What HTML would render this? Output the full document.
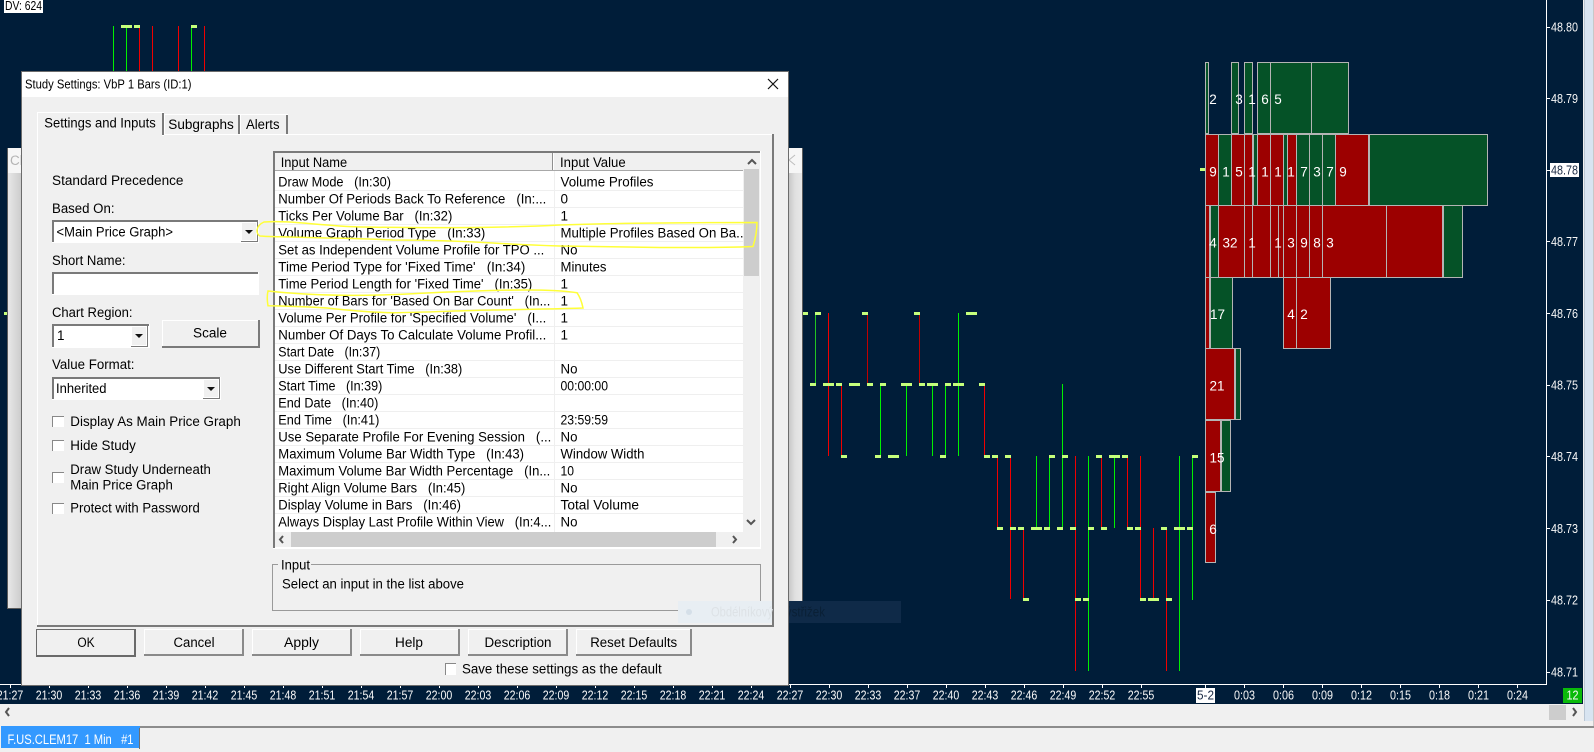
<!DOCTYPE html>
<html><head><meta charset="utf-8"><title>Study Settings</title>
<style>
html,body{margin:0;padding:0;background:#f0f0f0;width:1594px;height:752px;overflow:hidden}
svg{display:block;position:absolute;left:0;top:0}
text{font-family:"Liberation Sans",sans-serif;font-size:13.5px;fill:#000}
.ax text{font-size:12.5px;fill:#f8f8f8}
.pf text{font-size:13.5px;fill:#fff}
.r{fill:#9c0000}.g{fill:#055227}
.pf rect{stroke:#b4b4b4;stroke-width:1}
.d{fill:#c6ff7c}
</style></head><body>
<svg width="1594" height="752" viewBox="0 0 1594 752" xmlns="http://www.w3.org/2000/svg">
<defs>
<linearGradient id="sh" x1="0" x2="1" y1="0" y2="0"><stop offset="0" stop-color="#c4c4c4"/><stop offset=".5" stop-color="#e0e0e0"/><stop offset="1" stop-color="#e8e8e8"/></linearGradient>
<linearGradient id="sl" x1="0" x2="1" y1="0" y2="0"><stop offset="0" stop-color="#e8e8e8"/><stop offset="1" stop-color="#cacaca"/></linearGradient>
</defs>
<rect width="1594" height="752" fill="#f0f0f0"/>
<!-- chart -->
<rect x="0" y="0" width="1583" height="704" fill="#001d39"/>
<rect x="1584" y="0" width="9" height="721" fill="#d8e4f1"/>
<rect x="1584" y="0" width="1" height="721" fill="#b9c6d4"/>
<rect x="1593" y="0" width="1" height="726" fill="#c8c8c8"/>
<rect x="1546" y="0" width="1" height="685" fill="#fff"/>
<rect x="0" y="684" width="1547" height="1" fill="#fff"/>
<g shape-rendering="crispEdges" fill="#00f000">
<rect x="113" y="26" width="1" height="46"/><rect x="126" y="26" width="1" height="46"/><rect x="191" y="26" width="1" height="46"/>
<rect x="815" y="313" width="1" height="71" fill="#22c422"/>
<rect x="880" y="384" width="1" height="72"/><rect x="906" y="384" width="1" height="72"/><rect x="932" y="384" width="1" height="72"/><rect x="945" y="384" width="1" height="72"/>
<rect x="958" y="313" width="1" height="143"/><rect x="1036" y="456" width="1" height="72"/><rect x="1049" y="456" width="1" height="72"/>
<rect x="1062" y="384" width="1" height="144"/><rect x="1088" y="456" width="1" height="215"/><rect x="1114" y="456" width="1" height="72"/>
<rect x="1179" y="456" width="1" height="215"/><rect x="1192" y="456" width="1" height="144"/>
</g>
<g shape-rendering="crispEdges" fill="#f00000">
<rect x="139" y="26" width="1" height="46"/><rect x="152" y="26" width="1" height="46"/><rect x="178" y="26" width="1" height="46"/><rect x="204" y="26" width="1" height="46"/>
<rect x="828" y="313" width="1" height="143"/><rect x="841" y="384" width="1" height="72"/>
<rect x="867" y="313" width="1" height="71" fill="#c00000"/><rect x="919" y="313" width="1" height="71" fill="#c00000"/>
<rect x="984" y="384" width="1" height="72"/><rect x="997" y="456" width="1" height="72"/><rect x="1010" y="456" width="1" height="143"/>
<rect x="1023" y="528" width="1" height="71"/><rect x="1075" y="456" width="1" height="215"/><rect x="1101" y="456" width="1" height="72"/>
<rect x="1127" y="456" width="1" height="72"/><rect x="1140" y="456" width="1" height="143"/><rect x="1153" y="528" width="1" height="71"/>
<rect x="1166" y="528" width="1" height="143"/>
</g>
<g class="d" shape-rendering="crispEdges">
<rect x="121" y="25" width="11" height="3"/><rect x="134" y="25" width="6" height="3"/><rect x="191" y="25" width="6" height="3"/>
<rect x="4" y="312" width="3" height="3"/><rect x="1200" y="168" width="5" height="3"/>
<rect x="803" y="312" width="5" height="3"/><rect x="815" y="312" width="6" height="3"/><rect x="862" y="312" width="6" height="3"/><rect x="914" y="312" width="6" height="3"/><rect x="966" y="312" width="11" height="3"/>
<rect x="810" y="383" width="6" height="3"/><rect x="823" y="383" width="11" height="3"/><rect x="836" y="383" width="6" height="3"/><rect x="849" y="383" width="11" height="3"/><rect x="867" y="383" width="6" height="3"/><rect x="880" y="383" width="6" height="3"/><rect x="901" y="383" width="11" height="3"/><rect x="919" y="383" width="6" height="3"/><rect x="927" y="383" width="11" height="3"/><rect x="945" y="383" width="6" height="3"/><rect x="953" y="383" width="11" height="3"/><rect x="979" y="383" width="6" height="3"/>
<rect x="841" y="455" width="6" height="3"/><rect x="875" y="455" width="6" height="3"/><rect x="888" y="455" width="11" height="3"/><rect x="940" y="455" width="6" height="3"/><rect x="984" y="455" width="6" height="3"/><rect x="992" y="455" width="6" height="3"/><rect x="1005" y="455" width="6" height="3"/><rect x="1049" y="455" width="6" height="3"/><rect x="1062" y="455" width="6" height="3"/><rect x="1096" y="455" width="6" height="3"/><rect x="1109" y="455" width="11" height="3"/><rect x="1122" y="455" width="6" height="3"/><rect x="1192" y="455" width="6" height="3"/>
<rect x="997" y="527" width="6" height="3"/><rect x="1010" y="527" width="6" height="3"/><rect x="1018" y="527" width="6" height="3"/><rect x="1031" y="527" width="11" height="3"/><rect x="1044" y="527" width="6" height="3"/><rect x="1057" y="527" width="6" height="3"/><rect x="1070" y="527" width="6" height="3"/><rect x="1088" y="527" width="6" height="3"/><rect x="1101" y="527" width="6" height="3"/><rect x="1127" y="527" width="6" height="3"/><rect x="1135" y="527" width="6" height="3"/><rect x="1161" y="527" width="6" height="3"/><rect x="1174" y="527" width="11" height="3"/><rect x="1187" y="527" width="6" height="3"/>
<rect x="1023" y="598" width="6" height="3"/><rect x="1075" y="598" width="6" height="3"/><rect x="1083" y="598" width="6" height="3"/><rect x="1140" y="598" width="6" height="3"/><rect x="1148" y="598" width="11" height="3"/><rect x="1166" y="598" width="6" height="3"/>
</g>
<!-- profile -->
<g class="pf" shape-rendering="crispEdges">
<rect class="g" x="1205.5" y="62.5" width="3" height="71"/><rect class="g" x="1231.5" y="62.5" width="7" height="71"/><rect class="g" x="1244.5" y="62.5" width="8" height="71"/><rect class="g" x="1257.5" y="62.5" width="13" height="71"/><rect class="g" x="1270.5" y="62.5" width="41" height="71"/><rect class="g" x="1311.5" y="62.5" width="37" height="71"/>
<rect class="r" x="1205.5" y="134.5" width="13" height="71"/><rect class="g" x="1218.5" y="134.5" width="13" height="71"/><rect class="r" x="1231.5" y="134.5" width="13" height="71"/><rect class="r" x="1244.5" y="134.5" width="8" height="71"/><rect class="g" x="1253.5" y="134.5" width="4" height="71"/><rect class="r" x="1257.5" y="134.5" width="13" height="71"/><rect class="r" x="1270.5" y="134.5" width="13" height="71"/><rect class="g" x="1283.5" y="134.5" width="4" height="71"/><rect class="r" x="1287.5" y="134.5" width="9" height="71"/><rect class="g" x="1296.5" y="134.5" width="13" height="71"/><rect class="g" x="1309.5" y="134.5" width="13" height="71"/><rect class="g" x="1322.5" y="134.5" width="13" height="71"/><rect class="r" x="1335.5" y="134.5" width="33" height="71"/><rect class="g" x="1369.5" y="134.5" width="118" height="71"/>
<rect class="r" x="1205.5" y="205.5" width="4" height="72"/><rect class="g" x="1210.5" y="205.5" width="8" height="72"/><rect class="r" x="1218.5" y="205.5" width="26" height="72"/><rect class="r" x="1244.5" y="205.5" width="8" height="72"/><rect class="r" x="1252.5" y="205.5" width="18" height="72"/><rect class="r" x="1270.5" y="205.5" width="8" height="72"/><rect class="r" x="1278.5" y="205.5" width="5" height="72"/><rect class="r" x="1283.5" y="205.5" width="13" height="72"/><rect class="r" x="1296.5" y="205.5" width="13" height="72"/><rect class="r" x="1309.5" y="205.5" width="13" height="72"/><rect class="r" x="1322.5" y="205.5" width="64" height="72"/><rect class="r" x="1386.5" y="205.5" width="56" height="72"/><rect class="g" x="1443.5" y="205.5" width="19" height="72"/>
<rect class="r" x="1205.5" y="277.5" width="4" height="71"/><rect class="g" x="1210.5" y="277.5" width="22" height="71"/><rect class="r" x="1283.5" y="277.5" width="13" height="71"/><rect class="r" x="1296.5" y="277.5" width="34" height="71"/>
<rect class="r" x="1205.5" y="348.5" width="29" height="71"/><rect class="g" x="1235.5" y="348.5" width="5" height="71"/>
<rect class="r" x="1205.5" y="420.5" width="15" height="71"/><rect class="g" x="1221.5" y="420.5" width="9" height="71"/>
<rect class="r" x="1205.5" y="492.5" width="10" height="70"/>
</g>
<g class="pf" text-anchor="middle">
<text x="1213" y="104">2</text><text x="1239" y="104">3</text><text x="1252" y="104">1</text><text x="1265" y="104">6</text><text x="1278" y="104">5</text>
<text x="1213" y="176.5">9</text><text x="1226" y="176.5">1</text><text x="1239" y="176.5">5</text><text x="1252" y="176.5">1</text><text x="1265" y="176.5">1</text><text x="1278" y="176.5">1</text><text x="1291" y="176.5">1</text><text x="1304" y="176.5">7</text><text x="1317" y="176.5">3</text><text x="1330" y="176.5">7</text><text x="1343" y="176.5">9</text>
<text x="1213" y="247.5">4</text><text x="1230" y="247.5">32</text><text x="1252" y="247.5">1</text><text x="1278" y="247.5">1</text><text x="1291" y="247.5">3</text><text x="1304" y="247.5">9</text><text x="1317" y="247.5">8</text><text x="1330" y="247.5">3</text>
<text x="1217.5" y="319">17</text><text x="1291" y="319">4</text><text x="1304" y="319">2</text>
<text x="1217" y="390.5">21</text><text x="1217" y="462.5">15</text><text x="1213" y="534">6</text>
</g>
<!-- price axis -->
<g fill="#fff" shape-rendering="crispEdges">
<rect x="1547" y="27" width="3" height="1"/><rect x="1547" y="98" width="3" height="1"/><rect x="1547" y="170" width="3" height="1"/><rect x="1547" y="241" width="3" height="1"/><rect x="1547" y="313" width="3" height="1"/><rect x="1547" y="385" width="3" height="1"/><rect x="1547" y="456" width="3" height="1"/><rect x="1547" y="528" width="3" height="1"/><rect x="1547" y="600" width="3" height="1"/><rect x="1547" y="672" width="3" height="1"/>
</g>
<rect x="1550" y="163" width="29" height="14" fill="#fff"/>
<g class="ax">
<text x="1551" y="31.5" textLength="27" lengthAdjust="spacingAndGlyphs">48.80</text>
<text x="1551" y="103" textLength="27" lengthAdjust="spacingAndGlyphs">48.79</text>
<text x="1551" y="174.5" textLength="27" lengthAdjust="spacingAndGlyphs" style="fill:#1a2a44">48.78</text>
<text x="1551" y="246" textLength="27" lengthAdjust="spacingAndGlyphs">48.77</text>
<text x="1551" y="318" textLength="27" lengthAdjust="spacingAndGlyphs">48.76</text>
<text x="1551" y="389.5" textLength="27" lengthAdjust="spacingAndGlyphs">48.75</text>
<text x="1551" y="461" textLength="27" lengthAdjust="spacingAndGlyphs">48.74</text>
<text x="1551" y="533" textLength="27" lengthAdjust="spacingAndGlyphs">48.73</text>
<text x="1551" y="604.5" textLength="27" lengthAdjust="spacingAndGlyphs">48.72</text>
<text x="1551" y="676.5" textLength="27" lengthAdjust="spacingAndGlyphs">48.71</text>
</g>
<!-- time axis ticks -->
<path stroke="#fff" stroke-width="1" shape-rendering="crispEdges" d="M10.5 685v3M49.5 685v3M88.5 685v3M127.5 685v3M166.5 685v3M205.5 685v3M244.5 685v3M283.5 685v3M322.5 685v3M361.5 685v3M400.5 685v3M439.5 685v3M478.5 685v3M517.5 685v3M556.5 685v3M595.5 685v3M634.5 685v3M673.5 685v3M712.5 685v3M751.5 685v3M790.5 685v3M829.5 685v3M868.5 685v3M907.5 685v3M946.5 685v3M985.5 685v3M1024.5 685v3M1063.5 685v3M1102.5 685v3M1141.5 685v3M1205.5 685v3M1244.5 685v3M1283.5 685v3M1322.5 685v3M1361.5 685v3M1400.5 685v3M1439.5 685v3M1478.5 685v3M1517.5 685v3"/>
<rect x="1196" y="688" width="19" height="15" fill="#fff"/>
<rect x="1563" y="688" width="19" height="15" fill="#0aba0a"/>
<g class="ax" text-anchor="middle">
<text x="10" y="699.5" textLength="26.5" lengthAdjust="spacingAndGlyphs">21:27</text>
<text x="49" y="699.5" textLength="26.5" lengthAdjust="spacingAndGlyphs">21:30</text>
<text x="88" y="699.5" textLength="26.5" lengthAdjust="spacingAndGlyphs">21:33</text>
<text x="127" y="699.5" textLength="26.5" lengthAdjust="spacingAndGlyphs">21:36</text>
<text x="166" y="699.5" textLength="26.5" lengthAdjust="spacingAndGlyphs">21:39</text>
<text x="205" y="699.5" textLength="26.5" lengthAdjust="spacingAndGlyphs">21:42</text>
<text x="244" y="699.5" textLength="26.5" lengthAdjust="spacingAndGlyphs">21:45</text>
<text x="283" y="699.5" textLength="26.5" lengthAdjust="spacingAndGlyphs">21:48</text>
<text x="322" y="699.5" textLength="26.5" lengthAdjust="spacingAndGlyphs">21:51</text>
<text x="361" y="699.5" textLength="26.5" lengthAdjust="spacingAndGlyphs">21:54</text>
<text x="400" y="699.5" textLength="26.5" lengthAdjust="spacingAndGlyphs">21:57</text>
<text x="439" y="699.5" textLength="26.5" lengthAdjust="spacingAndGlyphs">22:00</text>
<text x="478" y="699.5" textLength="26.5" lengthAdjust="spacingAndGlyphs">22:03</text>
<text x="517" y="699.5" textLength="26.5" lengthAdjust="spacingAndGlyphs">22:06</text>
<text x="556" y="699.5" textLength="26.5" lengthAdjust="spacingAndGlyphs">22:09</text>
<text x="595" y="699.5" textLength="26.5" lengthAdjust="spacingAndGlyphs">22:12</text>
<text x="634" y="699.5" textLength="26.5" lengthAdjust="spacingAndGlyphs">22:15</text>
<text x="673" y="699.5" textLength="26.5" lengthAdjust="spacingAndGlyphs">22:18</text>
<text x="712" y="699.5" textLength="26.5" lengthAdjust="spacingAndGlyphs">22:21</text>
<text x="751" y="699.5" textLength="26.5" lengthAdjust="spacingAndGlyphs">22:24</text>
<text x="790" y="699.5" textLength="26.5" lengthAdjust="spacingAndGlyphs">22:27</text>
<text x="829" y="699.5" textLength="26.5" lengthAdjust="spacingAndGlyphs">22:30</text>
<text x="868" y="699.5" textLength="26.5" lengthAdjust="spacingAndGlyphs">22:33</text>
<text x="907" y="699.5" textLength="26.5" lengthAdjust="spacingAndGlyphs">22:37</text>
<text x="946" y="699.5" textLength="26.5" lengthAdjust="spacingAndGlyphs">22:40</text>
<text x="985" y="699.5" textLength="26.5" lengthAdjust="spacingAndGlyphs">22:43</text>
<text x="1024" y="699.5" textLength="26.5" lengthAdjust="spacingAndGlyphs">22:46</text>
<text x="1063" y="699.5" textLength="26.5" lengthAdjust="spacingAndGlyphs">22:49</text>
<text x="1102" y="699.5" textLength="26.5" lengthAdjust="spacingAndGlyphs">22:52</text>
<text x="1141" y="699.5" textLength="26.5" lengthAdjust="spacingAndGlyphs">22:55</text>
<text x="1205.5" y="699.5" textLength="17" lengthAdjust="spacingAndGlyphs" style="fill:#1a2a44">5-2</text>
<text x="1244.5" y="699.5" textLength="21" lengthAdjust="spacingAndGlyphs">0:03</text>
<text x="1283.5" y="699.5" textLength="21" lengthAdjust="spacingAndGlyphs">0:06</text>
<text x="1322.5" y="699.5" textLength="21" lengthAdjust="spacingAndGlyphs">0:09</text>
<text x="1361.5" y="699.5" textLength="21" lengthAdjust="spacingAndGlyphs">0:12</text>
<text x="1400.5" y="699.5" textLength="21" lengthAdjust="spacingAndGlyphs">0:15</text>
<text x="1439.5" y="699.5" textLength="21" lengthAdjust="spacingAndGlyphs">0:18</text>
<text x="1478.5" y="699.5" textLength="21" lengthAdjust="spacingAndGlyphs">0:21</text>
<text x="1517.5" y="699.5" textLength="21" lengthAdjust="spacingAndGlyphs">0:24</text>
<text x="1572.5" y="699.5" textLength="12" lengthAdjust="spacingAndGlyphs">12</text>
</g>
<!-- DV -->
<rect x="4" y="0" width="39" height="13" fill="#fff"/>
<text x="5" y="10" textLength="37" lengthAdjust="spacingAndGlyphs" style="font-size:12.5px">DV: 624</text>
<!-- bottom scrollbar -->
<rect x="1549" y="705" width="17" height="15" fill="#cdcdcd"/>
<path d="M9 708l-3 4 3 4" fill="none" stroke="#555" stroke-width="2"/>
<path d="M1573 708l3 4-3 4" fill="none" stroke="#555" stroke-width="2"/>
<!-- tab bar -->
<rect x="140" y="726" width="1454" height="2" fill="#8c8c8c"/>
<rect x="1" y="726" width="139" height="22" fill="#3399ff"/>
<rect x="139" y="728" width="1" height="21" fill="#707070"/>
<text x="7.5" y="744" textLength="126" lengthAdjust="spacingAndGlyphs" style="fill:#fff">F.US.CLEM17&#160;&#160;1 Min&#160;&#160;&#160;#1</text>
<!-- behind window -->
<rect x="7" y="148" width="796" height="461" fill="#5c5c5c"/>
<rect x="8" y="148" width="794" height="460" fill="#f6f6f6"/>
<rect x="8" y="173" width="14" height="435" fill="url(#sl)"/>
<rect x="788" y="173" width="14" height="435" fill="url(#sh)"/>
<text x="10" y="165" style="fill:#b4b4b4">Cl</text>
<path d="M795 155l-6 5 6 5" fill="none" stroke="#bdbdbd" stroke-width="1"/>
<!-- dialog -->
<rect x="21" y="71" width="768" height="615" fill="#6c6c6c"/>
<rect x="22" y="72" width="766" height="25" fill="#fff"/>
<rect x="22" y="97" width="766" height="588" fill="#f0f0f0"/>
<text x="25" y="88.5" textLength="166.5" lengthAdjust="spacingAndGlyphs" style="font-size:13px">Study Settings: VbP 1 Bars (ID:1)</text>
<path d="M768 79l10 10M778 79l-10 10" stroke="#111" stroke-width="1.2" fill="none"/>
<!-- tab panel -->
<g shape-rendering="crispEdges">
<rect x="37" y="134" width="737" height="493" fill="#7a7a7a"/>
<rect x="37" y="134" width="735" height="491" fill="#fff"/>
<rect x="38" y="135" width="734" height="490" fill="#f0f0f0"/>
<rect x="164" y="114" width="76" height="21" fill="#fff"/><rect x="165" y="115" width="73" height="19" fill="#f0f0f0"/><rect x="238" y="115" width="2" height="19" fill="#7a7a7a"/>
<rect x="240" y="114" width="48" height="21" fill="#fff"/><rect x="241" y="115" width="45" height="19" fill="#f0f0f0"/><rect x="286" y="115" width="2" height="19" fill="#7a7a7a"/>
<rect x="37" y="112" width="127" height="24" fill="#fff"/><rect x="38" y="113" width="124" height="23" fill="#f0f0f0"/><rect x="162" y="113" width="2" height="22" fill="#7a7a7a"/>
</g>
<text x="44.3" y="127.5" textLength="111.5" lengthAdjust="spacingAndGlyphs">Settings and Inputs</text>
<text x="168.3" y="129" textLength="65.5" lengthAdjust="spacingAndGlyphs">Subgraphs</text>
<text x="246" y="129" textLength="33.5" lengthAdjust="spacingAndGlyphs">Alerts</text>
<!-- left controls -->
<text x="52" y="185" textLength="131.5" lengthAdjust="spacingAndGlyphs">Standard Precedence</text>
<text x="52" y="213" textLength="62.5" lengthAdjust="spacingAndGlyphs">Based On:</text>
<g shape-rendering="crispEdges">
<rect x="52" y="220" width="207" height="23" fill="#fff"/><rect x="52" y="220" width="206" height="2" fill="#7a7a7a"/><rect x="52" y="220" width="2" height="22" fill="#7a7a7a"/>
<rect x="241" y="222" width="17" height="20" fill="#7a7a7a"/><rect x="241" y="222" width="16" height="19" fill="#fff"/><rect x="242" y="223" width="14" height="17" fill="#f0f0f0"/>
<rect x="52" y="272" width="207" height="23" fill="#fff"/><rect x="52" y="272" width="206" height="2" fill="#7a7a7a"/><rect x="52" y="272" width="2" height="22" fill="#7a7a7a"/>
<rect x="52" y="324" width="98" height="24" fill="#fff"/><rect x="52" y="324" width="97" height="2" fill="#7a7a7a"/><rect x="52" y="324" width="2" height="23" fill="#7a7a7a"/>
<rect x="131" y="326" width="17" height="21" fill="#7a7a7a"/><rect x="131" y="326" width="16" height="20" fill="#fff"/><rect x="132" y="327" width="14" height="18" fill="#f0f0f0"/>
<rect x="162" y="320" width="98" height="28" fill="#7a7a7a"/><rect x="162" y="320" width="96" height="26" fill="#fff"/><rect x="163" y="321" width="95" height="25" fill="#f0f0f0"/>
<rect x="52" y="377" width="169" height="23" fill="#fff"/><rect x="52" y="377" width="168" height="2" fill="#7a7a7a"/><rect x="52" y="377" width="2" height="22" fill="#7a7a7a"/>
<rect x="203" y="379" width="17" height="20" fill="#7a7a7a"/><rect x="203" y="379" width="16" height="19" fill="#fff"/><rect x="204" y="380" width="14" height="17" fill="#f0f0f0"/>
</g>
<path d="M245 230h8l-4 4zM135 334h8l-4 4zM207 387h8l-4 4z" fill="#111"/>
<text x="56.5" y="236.5" textLength="116.5" lengthAdjust="spacingAndGlyphs">&lt;Main Price Graph&gt;</text>
<text x="52" y="265" textLength="73.5" lengthAdjust="spacingAndGlyphs">Short Name:</text>
<text x="52" y="317" textLength="80.5" lengthAdjust="spacingAndGlyphs">Chart Region:</text>
<text x="57" y="340">1</text>
<text x="210" y="337.5" text-anchor="middle" textLength="34" lengthAdjust="spacingAndGlyphs">Scale</text>
<text x="52" y="369" textLength="82.5" lengthAdjust="spacingAndGlyphs">Value Format:</text>
<text x="56" y="393" textLength="50.5" lengthAdjust="spacingAndGlyphs">Inherited</text>
<g shape-rendering="crispEdges">
<rect x="52" y="416" width="12" height="11" fill="#fff"/><path d="M52.5 427V416.500H64" fill="none" stroke="#888"/>
<rect x="52" y="440" width="12" height="11" fill="#fff"/><path d="M52.5 451V440.500H64" fill="none" stroke="#888"/>
<rect x="52" y="472" width="12" height="11" fill="#fff"/><path d="M52.5 483V472.500H64" fill="none" stroke="#888"/>
<rect x="52" y="503" width="12" height="11" fill="#fff"/><path d="M52.5 514V503.500H64" fill="none" stroke="#888"/>
<rect x="445" y="663" width="11" height="12" fill="#fff"/><path d="M445.500 675V663.500H456" fill="none" stroke="#888"/>
</g>
<text x="70.3" y="426" textLength="170.5" lengthAdjust="spacingAndGlyphs">Display As Main Price Graph</text>
<text x="70.3" y="450" textLength="65.5" lengthAdjust="spacingAndGlyphs">Hide Study</text>
<text x="70.3" y="474" textLength="140.5" lengthAdjust="spacingAndGlyphs">Draw Study Underneath</text>
<text x="70.3" y="489.5" textLength="102.5" lengthAdjust="spacingAndGlyphs">Main Price Graph</text>
<text x="70.3" y="512.500" textLength="129.5" lengthAdjust="spacingAndGlyphs">Protect with Password</text>
<!-- list -->
<g shape-rendering="crispEdges">
<rect x="273" y="151" width="488" height="398" fill="#fff"/>
<rect x="273" y="151" width="487" height="2" fill="#7a7a7a"/><rect x="273" y="151" width="2" height="397" fill="#7a7a7a"/>
<rect x="275" y="153" width="468" height="18" fill="#f0f0f0"/><rect x="275" y="170" width="468" height="1" fill="#a8a8a8"/>
<rect x="552" y="153" width="1" height="17" fill="#909090"/><rect x="553" y="153" width="1" height="17" fill="#fff"/>
<path stroke="#efefef" d="M275 190.500H743M275 207.500H743M275 224.500H743M275 241.500H743M275 258.500H743M275 275.500H743M275 292.500H743M275 309.500H743M275 326.500H743M275 343.500H743M275 360.500H743M275 377.500H743M275 394.500H743M275 411.500H743M275 428.500H743M275 445.500H743M275 462.500H743M275 479.500H743M275 496.500H743M275 513.500H743M554.500 171V532"/>
<rect x="743" y="153" width="17" height="379" fill="#f0f0f0"/>
<rect x="744" y="169" width="15" height="107" fill="#cdcdcd"/>
<rect x="275" y="532" width="485" height="15" fill="#f0f0f0"/>
<rect x="291" y="532" width="425" height="15" fill="#cdcdcd"/>
</g>
<path d="M748 164l4-4 4 4M747 520l4 4 4-4M283 536l-3 3.500 3 3.500M733 536l3 3.500-3 3.500" fill="none" stroke="#555" stroke-width="2"/>
<text x="280.7" y="167" textLength="66.5" lengthAdjust="spacingAndGlyphs">Input Name</text>
<text x="560" y="167" textLength="65.7" lengthAdjust="spacingAndGlyphs">Input Value</text>
<g>
<text x="278.3" y="186.500" textLength="112.7" lengthAdjust="spacingAndGlyphs">Draw Mode&#160;&#160;&#160;(In:30)</text>
<text x="278.3" y="203.500" textLength="268" lengthAdjust="spacingAndGlyphs">Number Of Periods Back To Reference&#160;&#160;&#160;(In:...</text>
<text x="278.3" y="220.500" textLength="174" lengthAdjust="spacingAndGlyphs">Ticks Per Volume Bar&#160;&#160;&#160;(In:32)</text>
<text x="278.3" y="237.500" textLength="207" lengthAdjust="spacingAndGlyphs">Volume Graph Period Type&#160;&#160;&#160;(In:33)</text>
<text x="278.3" y="254.500" textLength="266" lengthAdjust="spacingAndGlyphs">Set as Independent Volume Profile for TPO ...</text>
<text x="278.3" y="271.500" textLength="247" lengthAdjust="spacingAndGlyphs">Time Period Type for 'Fixed Time'&#160;&#160;&#160;(In:34)</text>
<text x="278.3" y="288.500" textLength="254" lengthAdjust="spacingAndGlyphs">Time Period Length for 'Fixed Time'&#160;&#160;&#160;(In:35)</text>
<text x="278.3" y="305.500" textLength="272" lengthAdjust="spacingAndGlyphs">Number of Bars for 'Based On Bar Count'&#160;&#160;&#160;(In...</text>
<text x="278.3" y="322.500" textLength="268" lengthAdjust="spacingAndGlyphs">Volume Per Profile for 'Specified Volume'&#160;&#160;&#160;(I...</text>
<text x="278.3" y="339.500" textLength="268" lengthAdjust="spacingAndGlyphs">Number Of Days To Calculate Volume Profil...</text>
<text x="278.3" y="356.500" textLength="102" lengthAdjust="spacingAndGlyphs">Start Date&#160;&#160;&#160;(In:37)</text>
<text x="278.3" y="373.500" textLength="184" lengthAdjust="spacingAndGlyphs">Use Different Start Time&#160;&#160;&#160;(In:38)</text>
<text x="278.3" y="390.500" textLength="104" lengthAdjust="spacingAndGlyphs">Start Time&#160;&#160;&#160;(In:39)</text>
<text x="278.3" y="407.500" textLength="100" lengthAdjust="spacingAndGlyphs">End Date&#160;&#160;&#160;(In:40)</text>
<text x="278.3" y="424.500" textLength="101" lengthAdjust="spacingAndGlyphs">End Time&#160;&#160;&#160;(In:41)</text>
<text x="278.3" y="441.500" textLength="273" lengthAdjust="spacingAndGlyphs">Use Separate Profile For Evening Session&#160;&#160;&#160;(...</text>
<text x="278.3" y="458.500" textLength="245.700" lengthAdjust="spacingAndGlyphs">Maximum Volume Bar Width Type&#160;&#160;&#160;(In:43)</text>
<text x="278.3" y="475.500" textLength="272" lengthAdjust="spacingAndGlyphs">Maximum Volume Bar Width Percentage&#160;&#160;&#160;(In...</text>
<text x="278.3" y="492.500" textLength="187" lengthAdjust="spacingAndGlyphs">Right Align Volume Bars&#160;&#160;&#160;(In:45)</text>
<text x="278.3" y="509.500" textLength="182.700" lengthAdjust="spacingAndGlyphs">Display Volume in Bars&#160;&#160;&#160;(In:46)</text>
<text x="278.3" y="526.500" textLength="273" lengthAdjust="spacingAndGlyphs">Always Display Last Profile Within View&#160;&#160;&#160;(In:4...</text>
<text x="560.5" y="186.500" textLength="93" lengthAdjust="spacingAndGlyphs">Volume Profiles</text>
<text x="560.5" y="203.500">0</text><text x="560.5" y="220.500">1</text>
<text x="560.5" y="237.500" textLength="183" lengthAdjust="spacingAndGlyphs">Multiple Profiles Based On Ba..</text>
<text x="560.5" y="254.500" textLength="17" lengthAdjust="spacingAndGlyphs">No</text>
<text x="560.5" y="271.500" textLength="46" lengthAdjust="spacingAndGlyphs">Minutes</text>
<text x="560.5" y="288.500">1</text><text x="560.5" y="305.500">1</text><text x="560.5" y="322.500">1</text><text x="560.5" y="339.500">1</text>
<text x="560.5" y="373.500" textLength="17" lengthAdjust="spacingAndGlyphs">No</text>
<text x="560.5" y="390.500" textLength="47.500" lengthAdjust="spacingAndGlyphs">00:00:00</text>
<text x="560.5" y="424.500" textLength="47.500" lengthAdjust="spacingAndGlyphs">23:59:59</text>
<text x="560.5" y="441.500" textLength="17" lengthAdjust="spacingAndGlyphs">No</text>
<text x="560.5" y="458.500" textLength="84" lengthAdjust="spacingAndGlyphs">Window Width</text>
<text x="560.5" y="475.500" textLength="13.500" lengthAdjust="spacingAndGlyphs">10</text>
<text x="560.5" y="492.500" textLength="17" lengthAdjust="spacingAndGlyphs">No</text>
<text x="560.5" y="509.500" textLength="78.500" lengthAdjust="spacingAndGlyphs">Total Volume</text>
<text x="560.5" y="526.500" textLength="17" lengthAdjust="spacingAndGlyphs">No</text>
</g>
<!-- input group -->
<path d="M278 564.500H272.500V610.500H760.500V564.500H311" fill="none" stroke="#9a9a9a" shape-rendering="crispEdges"/>
<text x="281" y="569.500" textLength="29" lengthAdjust="spacingAndGlyphs">Input</text>
<text x="282" y="588.500" textLength="182" lengthAdjust="spacingAndGlyphs">Select an input in the list above</text>
<!-- buttons -->
<g shape-rendering="crispEdges">
<rect x="36" y="629" width="100" height="28" fill="#6a6a6a"/><rect x="37" y="630" width="97" height="25" fill="#f0f0f0"/>
<rect x="144" y="629" width="100" height="27" fill="#8a8a8a"/><rect x="144" y="629" width="98" height="25" fill="#fff"/><rect x="145" y="630" width="97" height="24" fill="#f0f0f0"/>
<rect x="252" y="629" width="100" height="27" fill="#8a8a8a"/><rect x="252" y="629" width="98" height="25" fill="#fff"/><rect x="253" y="630" width="97" height="24" fill="#f0f0f0"/>
<rect x="360" y="629" width="100" height="27" fill="#8a8a8a"/><rect x="360" y="629" width="98" height="25" fill="#fff"/><rect x="361" y="630" width="97" height="24" fill="#f0f0f0"/>
<rect x="468" y="629" width="100" height="27" fill="#8a8a8a"/><rect x="468" y="629" width="98" height="25" fill="#fff"/><rect x="469" y="630" width="97" height="24" fill="#f0f0f0"/>
<rect x="576" y="629" width="116" height="27" fill="#8a8a8a"/><rect x="576" y="629" width="114" height="25" fill="#fff"/><rect x="577" y="630" width="113" height="24" fill="#f0f0f0"/>
</g>
<g text-anchor="middle">
<text x="86" y="647" textLength="17.300" lengthAdjust="spacingAndGlyphs">OK</text>
<text x="194" y="647" textLength="41" lengthAdjust="spacingAndGlyphs">Cancel</text>
<text x="301.500" y="647" textLength="35" lengthAdjust="spacingAndGlyphs">Apply</text>
<text x="409" y="647" textLength="28" lengthAdjust="spacingAndGlyphs">Help</text>
<text x="518" y="647" textLength="67" lengthAdjust="spacingAndGlyphs">Description</text>
<text x="633.700" y="647" textLength="87" lengthAdjust="spacingAndGlyphs">Reset Defaults</text>
</g>
<text x="462" y="673.500" textLength="199.700" lengthAdjust="spacingAndGlyphs">Save these settings as the default</text>
<!-- faint overlay -->
<rect x="678" y="601" width="94" height="22" fill="#e8eef3"/>
<rect x="789" y="601" width="112" height="22" fill="#0f2a48"/>
<circle cx="689" cy="612" r="3" fill="#d5dfe8"/>
<text x="711" y="616.500" style="fill:#dde2e6" textLength="62" lengthAdjust="spacingAndGlyphs">Obdélníkový</text>
<text x="780" y="616.500" style="fill:#0a2036" textLength="45" lengthAdjust="spacingAndGlyphs">výstřižek</text>
<rect x="774" y="601" width="14" height="22" fill="#f0f0f0"/>
<rect x="788" y="601" width="1" height="22" fill="#6c6c6c"/>
<!-- yellow annotations -->
<path d="M264 222C290 220 320 226 360 227C420 228 500 228 560 225C620 223 700 222.500 757 222.500C757 230 755 240 753 246.500C720 248 690 247.500 660 247.500C620 247 590 246.500 560 246C530 245 510 244 493 243C460 241 425 240 393 240C370 239 345 238 327 238C310 237.500 295 237 280 236.700C272 236.500 265 236.500 260 236C256 234 255 226 264 222Z" fill="none" stroke="#ffff38" stroke-width="1.500"/>
<path d="M268 291C300 294.500 340 296 380 295C400 294.500 415 293.500 427 293C460 291.500 495 290 527 290C545 290 565 291 577 292.700C580 297 582 303 583 308C555 309 520 309.500 493 310C460 310.500 425 312.500 393 312.700C370 312.500 345 310 327 308C305 306.500 285 306 268 305.700C267 300 267 295 268 291Z" fill="none" stroke="#ffff38" stroke-width="1.500"/>
</svg>
</body></html>
